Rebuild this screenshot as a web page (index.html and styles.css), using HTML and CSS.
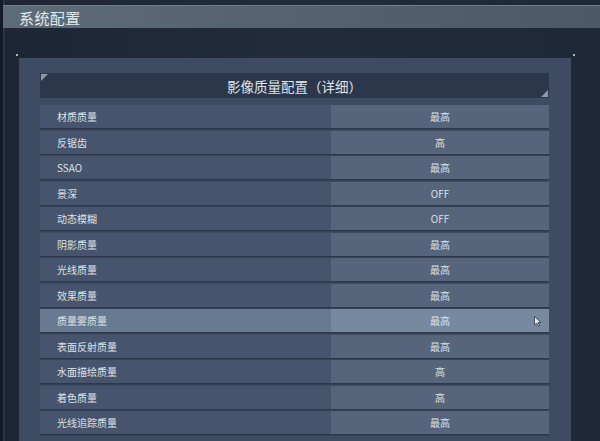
FILE: index.html
```html
<!DOCTYPE html>
<html lang="zh-CN">
<head>
    <meta charset="UTF-8">
    <title>系统配置</title>
    <link rel="stylesheet" href="styles.css">
</head>
<body>
    <div class="screen">
        <div class="title-bar">
            <h1>系统配置</h1>
        </div>
        <div class="main">
            <span class="dot dot-left"></span>
            <span class="dot dot-right"></span>
            <div class="panel">
                <div class="section-head">
                    <span class="corner corner-tl"></span>
                    <span class="corner corner-br"></span>
                    影像质量配置（详细）
                </div>
                <div class="option-list">
                    <div class="option"><span class="option-name">材质质量</span><span class="option-value">最高</span></div>
                    <div class="option"><span class="option-name">反锯齿</span><span class="option-value">高</span></div>
                    <div class="option"><span class="option-name">SSAO</span><span class="option-value">最高</span></div>
                    <div class="option"><span class="option-name">景深</span><span class="option-value">OFF</span></div>
                    <div class="option"><span class="option-name">动态模糊</span><span class="option-value">OFF</span></div>
                    <div class="option"><span class="option-name">阴影质量</span><span class="option-value">最高</span></div>
                    <div class="option"><span class="option-name">光线质量</span><span class="option-value">最高</span></div>
                    <div class="option"><span class="option-name">效果质量</span><span class="option-value">最高</span></div>
                    <div class="option active">
                        <span class="option-name">质量雾质量</span>
                        <span class="option-value">最高
                            <svg class="cursor" width="8" height="11" viewBox="0 0 8 11">
                                <path d="M0.5 0.5 L0.5 9 L2.6 7.2 L4 10.3 L5.4 9.7 L4 6.6 L7 6.6 Z" fill="#e8edf2" stroke="#2a3342" stroke-width="0.8"/>
                            </svg>
                        </span>
                    </div>
                    <div class="option"><span class="option-name">表面反射质量</span><span class="option-value">最高</span></div>
                    <div class="option"><span class="option-name">水面描绘质量</span><span class="option-value">高</span></div>
                    <div class="option"><span class="option-name">着色质量</span><span class="option-value">高</span></div>
                    <div class="option"><span class="option-name">光线追踪质量</span><span class="option-value">最高</span></div>
                </div>
            </div>
        </div>
    </div>
</body>
</html>
```

FILE: styles.css
```css
body {
    margin: 0;
    padding: 0;
    background-color: #1c2331;
    font-family: "Noto Sans CJK SC", "Noto Sans", sans-serif;
    color: #dbe2e8;
}
.screen {
    width: 600px;
    height: 441px;
    overflow: hidden;
    padding-top: 5px;
    box-sizing: border-box;
    background: linear-gradient(90deg, #151b26 0, #151b26 3px, #2b3446 3px, #2b3446 5px, #1e2636 5px, #222b3c 50%, #1f2838 100%);
}
.title-bar {
    height: 23px;
    margin-left: 3px;
    display: flex;
    align-items: center;
    background: linear-gradient(90deg, #5d6c79 0%, #55636f 45%, #4b5866 100%);
    border-top: 1px solid #6e7d8a;
    box-sizing: border-box;
}
.title-bar h1 {
    margin: 0 0 0 16px;
    font-size: 15px;
    font-weight: normal;
    letter-spacing: 0.4px;
    color: #e2e8ec;
}
.main {
    position: relative;
    padding: 30px 0 0 19px;
}
.dot {
    position: absolute;
    top: 26px;
    width: 2px;
    height: 2px;
    background: #aab5c2;
}
.dot-left {
    left: 16px;
}
.dot-right {
    left: 573px;
}
.panel {
    width: 552px;
    height: 400px;
    box-sizing: border-box;
    padding: 15px 22px 0 21px;
    background: #3d4b63;
}
.section-head {
    position: relative;
    height: 25px;
    display: flex;
    align-items: center;
    justify-content: center;
    background: #2c374b;
    font-size: 13.5px;
    color: #dfe5ea;
}
.corner {
    position: absolute;
    width: 0;
    height: 0;
}
.corner-tl {
    top: 1px;
    left: 1px;
    border-top: 7px solid #8d98a8;
    border-right: 7px solid transparent;
}
.corner-br {
    bottom: 1px;
    right: 1px;
    border-bottom: 7px solid #8d98a8;
    border-left: 7px solid transparent;
}
.option-list {
    margin-top: 7px;
    display: flex;
    flex-direction: column;
    gap: 2.5px;
}
.option {
    height: 23px;
    display: grid;
    grid-template-columns: 291px 1fr;
    font-size: 10px;
    box-shadow: 0 1.5px 0 #2d384b;
}
.option-name {
    display: flex;
    align-items: center;
    padding-left: 17px;
    background: #46556d;
}
.option-value {
    position: relative;
    display: flex;
    align-items: center;
    justify-content: center;
    background: #56657c;
}
.option.active .option-name {
    background: #687a91;
}
.option.active .option-value {
    background: #7789a0;
}
.cursor {
    position: absolute;
    right: 7px;
    top: 7px;
}
```
